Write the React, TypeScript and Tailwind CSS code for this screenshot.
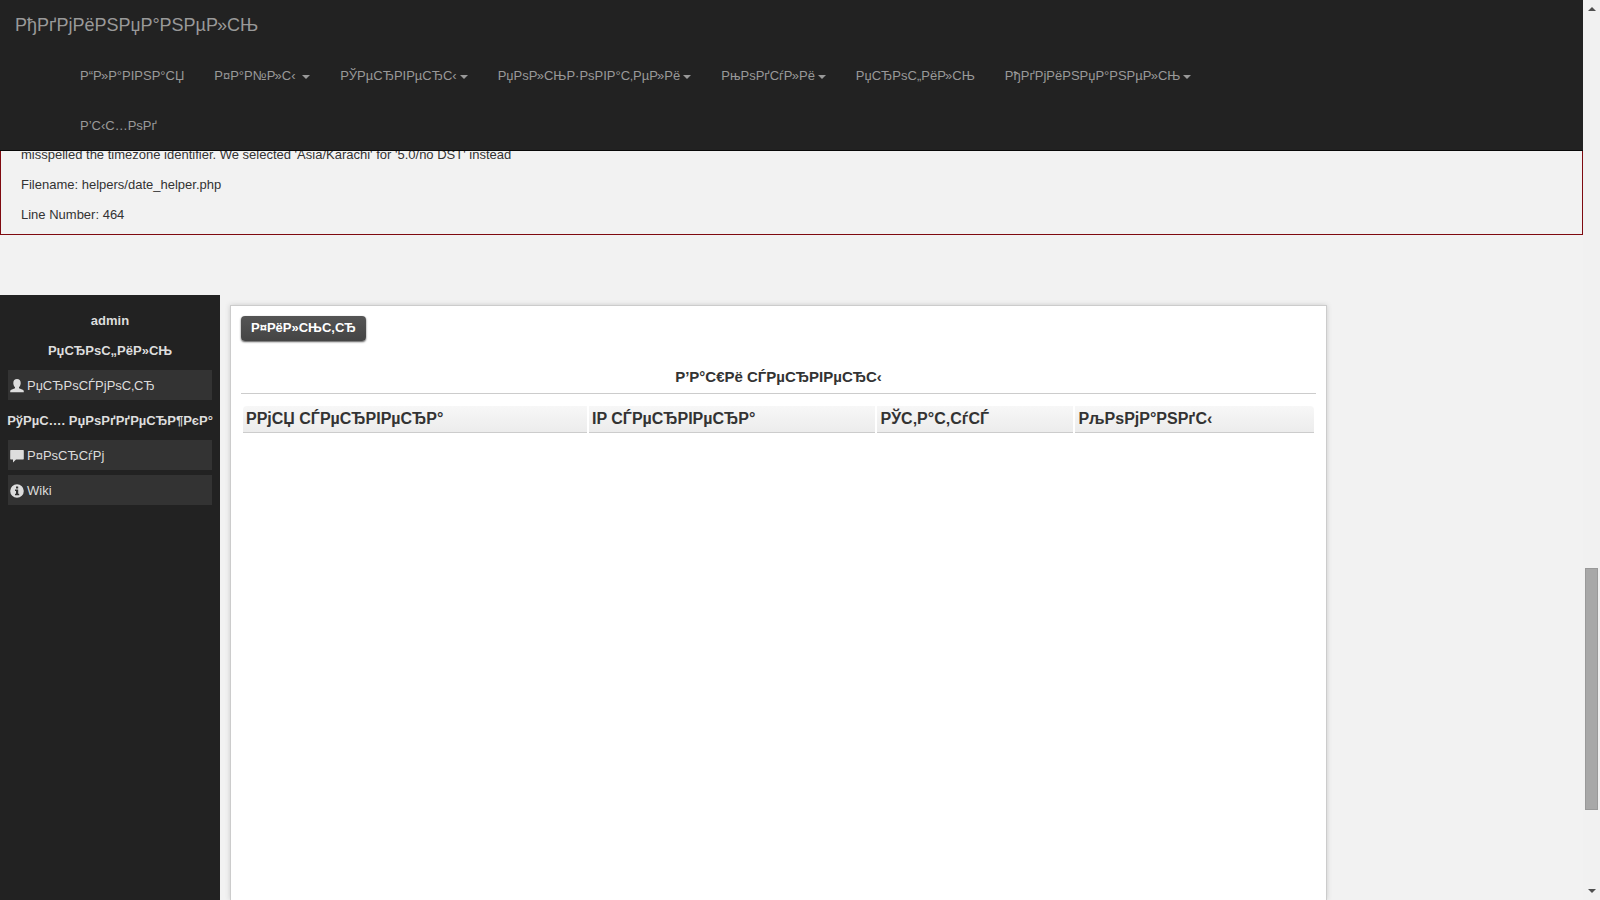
import { ReactNode } from 'react';

const navItems = [
  { label: 'Р“Р»Р°РІРЅР°СЏ' },
  { label: 'Р¤Р°Р№Р»С‹ ', menu: true },
  { label: 'РЎРµСЂРІРµСЂС‹', menu: true },
  { label: 'РџРѕР»СЊР·РѕРІР°С‚РµР»Рё', menu: true },
  { label: 'РњРѕРґСѓР»Рё', menu: true },
  { label: 'РџСЂРѕС„РёР»СЊ' },
  { label: 'РђРґРјРёРЅРџР°РЅРµР»СЊ', menu: true },
  { label: 'Р’С‹С…РѕРґ' },
];

const columns = [
  { label: 'РРјСЏ СЃРµСЂРІРµСЂР°', width: 'w-[32.3%]' },
  { label: 'IP СЃРµСЂРІРµСЂР°', width: 'w-[26.9%]' },
  { label: 'РЎС‚Р°С‚СѓСЃ', width: 'w-[18.4%]' },
  { label: 'РљРѕРјР°РЅРґС‹', width: 'w-[22.4%]' },
];

function UserIcon() {
  return (
    <svg viewBox="0 0 14 14" className="size-[14px] shrink-0" fill="currentColor">
      <path d="M7 0C4.700 0 3.300 1.500 3.300 3.900c0 1.800.8 3.500 1.700 4.300v1L1.300 10.800C.5 11.200.2 11.700.2 12.500V13.300h13.600v-.8c0-.8-.3-1.300-1.100-1.700L9 9.200v-1c.9-.8 1.700-2.500 1.700-4.300C10.700 1.500 9.300 0 7 0z" />
    </svg>
  );
}

function CommentIcon() {
  return (
    <svg viewBox="0 0 14 14" className="size-[14px] shrink-0" fill="currentColor">
      <path d="M.8 1h12.400a.6.6 0 0 1 .6.6v8.200a.6.6 0 0 1-.6.6H6L3 13.500v-3.100H.8a.6.6 0 0 1-.6-.6V1.600A.6.6 0 0 1 .8 1z" />
    </svg>
  );
}

function InfoIcon() {
  return (
    <svg viewBox="0 0 14 14" className="size-[14px] shrink-0" fill="currentColor">
      <path
        fillRule="evenodd"
        d="M7 .2a6.800 6.800 0 1 0 0 13.600A6.800 6.800 0 0 0 7 .2zM6 2.500h2.200v2H6zM5 5.500h3.200v4.200h1v1.500H5V9.700h1V7H5z"
      />
    </svg>
  );
}

function SideLink({ icon, children }: { icon: ReactNode; children: ReactNode }) {
  return (
    <a href="#" className="mb-[5px] flex h-[30px] items-center gap-[3px] bg-[#333] px-0.5 pt-px text-[#ddd]">
      {icon}
      {children}
    </a>
  );
}

function SideTitle({ children }: { children: ReactNode }) {
  return <p className="-mx-2 pt-px pb-[9px] text-center font-bold whitespace-nowrap text-[#ddd]">{children}</p>;
}

export default function App() {
  return (
    <div className="flex h-screen overflow-hidden bg-[#f2f2f2] font-['Liberation_Sans',Arial,sans-serif] text-[13px] leading-[20px] text-[#333]">
      <div className="flex min-w-0 flex-1 flex-col">
        {/* Navbar */}
        <header className="relative z-10 shrink-0 border-b border-[#080808] bg-[#222] text-[#999]">
          <a href="#" className="block w-fit p-[15px] text-[18px]">
            РђРґРјРёРЅРџР°РЅРµР»СЊ
          </a>
          <nav className="mr-[300px] ml-[65px] flex flex-wrap">
            {navItems.map((item) => (
              <a key={item.label} href="#" className="flex items-center px-[15px] pt-[16px] pb-[14px] whitespace-pre">
                {item.label}
                {item.menu && (
                  <span className="mt-px ml-[3px] border-x-4 border-t-4 border-x-transparent border-t-[#999]" />
                )}
              </a>
            ))}
          </nav>
        </header>

        {/* PHP warning */}
        <section className="-mt-[6px] shrink-0 space-y-[10px] border border-t-0 border-[#7f0a10] pb-[9px] pl-5">
          <p>misspelled the timezone identifier. We selected 'Asia/Karachi' for '5.0/no DST' instead</p>
          <p>Filename: helpers/date_helper.php</p>
          <p>Line Number: 464</p>
        </section>

        <div className="mt-[60px] flex min-h-0 flex-1">
          {/* Sidebar */}
          <aside className="w-[220px] shrink-0 bg-[#222] px-2 pt-[15px]">
            <SideTitle>admin</SideTitle>
            <SideTitle>РџСЂРѕС„РёР»СЊ</SideTitle>
            <SideLink icon={<UserIcon />}>РџСЂРѕСЃРјРѕС‚СЂ</SideLink>
            <div className="pt-[5px]">
              <SideTitle>РўРµС…. РџРѕРґРґРµСЂР¶РєР°</SideTitle>
            </div>
            <SideLink icon={<CommentIcon />}>Р¤РѕСЂСѓРј</SideLink>
            <SideLink icon={<InfoIcon />}>Wiki</SideLink>
          </aside>

          {/* Content */}
          <main className="mt-[10px] mr-[256px] ml-[10px] flex-1 border border-b-0 border-[#ccc] bg-white p-[10px] shadow-[0_0_5px_#ccc]">
            <button
              type="button"
              className="block h-[25px] rounded bg-linear-to-b from-[#555] to-[#444] px-[10px] pb-0.5 font-bold text-white shadow-[0_1px_2px_#555]"
            >
              Р¤РёР»СЊС‚СЂ
            </button>
            <h1 className="mt-[26px] border-b border-[#ccc] pb-[6px] text-center text-[15px] font-bold">
              Р’Р°С€Рё СЃРµСЂРІРµСЂС‹
            </h1>
            <table className="mt-[10px] w-full table-fixed border-separate border-spacing-[2px]">
              <thead>
                <tr>
                  {columns.map((col) => (
                    <th
                      key={col.label}
                      className={`${col.width} h-[27px] border-b border-[#ccc] bg-linear-to-b from-[#f7f7f7] to-[#ececec] px-[3px] text-left text-[16px] font-bold first:rounded-tl last:rounded-tr`}
                    >
                      {col.label}
                    </th>
                  ))}
                </tr>
              </thead>
            </table>
          </main>
        </div>
      </div>

      {/* Scrollbar */}
      <div className="flex w-[17px] shrink-0 flex-col items-center bg-[#f1f1f1] py-[7px]">
        <span className="border-x-4 border-b-4 border-x-transparent border-b-[#505050]" />
        <div className="mt-[557px] h-[242px] w-[13px] border border-[#999] bg-[#a8a8a8]" />
        <span className="mt-auto border-x-4 border-t-4 border-x-transparent border-t-[#505050]" />
      </div>
    </div>
  );
}
